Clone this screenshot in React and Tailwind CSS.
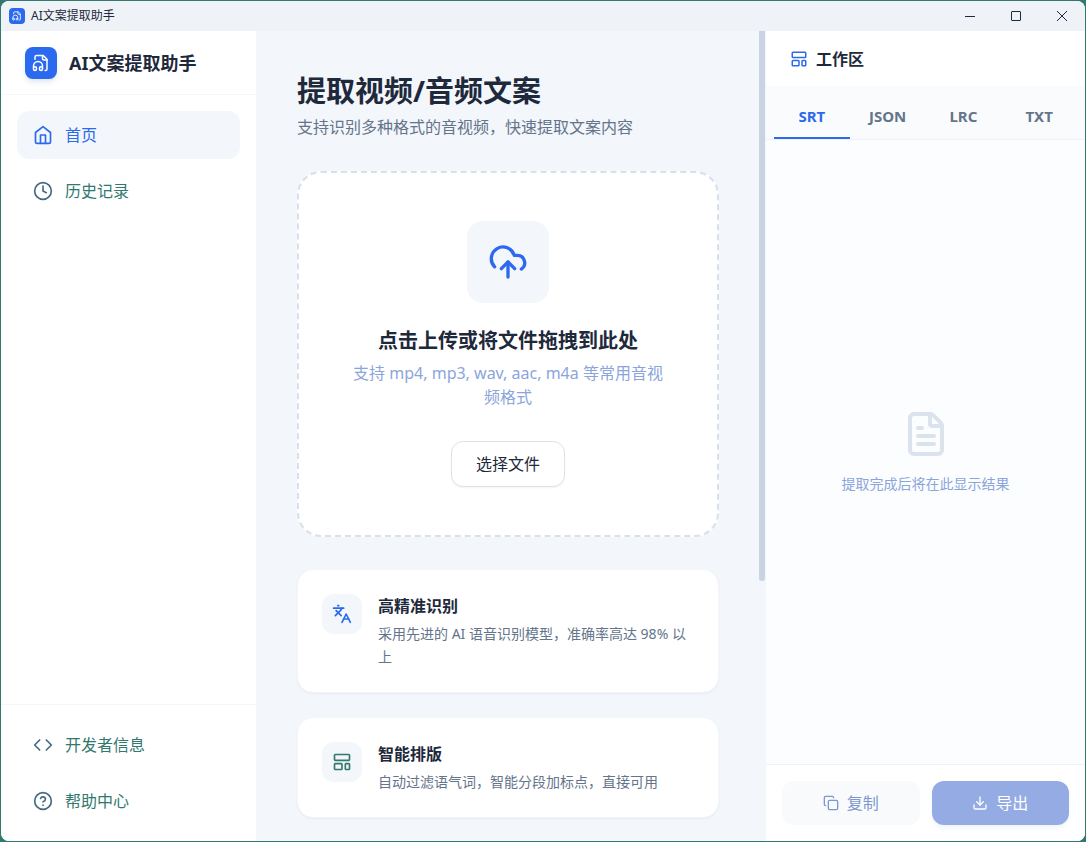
import { useState } from "react";
import {
  CircleHelp,
  Clock,
  Code,
  Copy,
  Download,
  FileText,
  Languages,
  LayoutTemplate,
} from "lucide-react";

function Icon({ size, children }) {
  return (
    <svg
      width={size}
      height={size}
      viewBox="0 0 24 24"
      fill="none"
      stroke="currentColor"
      strokeWidth="2"
      strokeLinecap="round"
      strokeLinejoin="round"
      aria-hidden="true"
    >
      {children}
    </svg>
  );
}

function HomeIcon({ size }) {
  return (
    <Icon size={size}>
      <path d="m3 9 9-7 9 7v11a2 2 0 0 1-2 2H5a2 2 0 0 1-2-2z" />
      <path d="M9 22V12h6v10" />
    </Icon>
  );
}

function UploadIcon({ size }) {
  return (
    <Icon size={size}>
      <path d="M4 14.899A7 7 0 1 1 15.71 8h1.79a4.5 4.5 0 0 1 2.5 8.242" />
      <path d="M12 12v9" />
      <path d="m16 16-4-4-4 4" />
    </Icon>
  );
}

function LogoIcon({ size }) {
  return (
    <Icon size={size}>
      <path d="M17.5 22h.5a2 2 0 0 0 2-2V7l-5-5H6a2 2 0 0 0-2 2v3" />
      <path d="M14 2v4a2 2 0 0 0 2 2h4" />
      <path d="M2 19a2 2 0 1 1 4 0v1a2 2 0 1 1-4 0v-4a6 6 0 0 1 12 0v4a2 2 0 1 1-4 0v-1a2 2 0 1 1 4 0" />
    </Icon>
  );
}

const mainLinks = [
  { label: "首页", icon: HomeIcon, active: true },
  { label: "历史记录", icon: Clock },
];

const footerLinks = [
  { label: "开发者信息", icon: Code },
  { label: "帮助中心", icon: CircleHelp },
];

const features = [
  {
    title: "高精准识别",
    text: "采用先进的 AI 语音识别模型，准确率高达 98% 以上",
    icon: Languages,
    color: "text-[#2b6aee]",
  },
  {
    title: "智能排版",
    text: "自动过滤语气词，智能分段加标点，直接可用",
    icon: LayoutTemplate,
    color: "text-[#33786f]",
  },
];

const tabs = ["SRT", "JSON", "LRC", "TXT"];

function NavLink({ label, icon: LinkIcon, active }) {
  return (
    <a
      href="#"
      className={`flex h-12 items-center gap-3 rounded-xl px-4 text-base ${
        active ? "bg-[#f3f6fa] text-[#2b6aee]" : "text-[#33786f]"
      }`}
    >
      <span className={active ? "" : "text-[#446a82]"}>
        <LinkIcon size={20} />
      </span>
      {label}
    </a>
  );
}

function TitleBar() {
  return (
    <header className="flex h-[30px] shrink-0 items-center bg-[#eff3f8] pl-2">
      <span className="flex size-4 items-center justify-center rounded-sm bg-[#2b6aee] text-white">
        <LogoIcon size={10} />
      </span>
      <span className="ml-1.5 text-xs">AI文案提取助手</span>
      <div className="ml-auto flex h-full">
        <button type="button" aria-label="最小化" className="flex w-[46px] items-center justify-center">
          <svg width="10" height="10" viewBox="0 0 10 10" fill="none" stroke="currentColor">
            <path d="M0 5.5h10" />
          </svg>
        </button>
        <button type="button" aria-label="最大化" className="flex w-[46px] items-center justify-center">
          <svg width="10" height="10" viewBox="0 0 10 10" fill="none" stroke="currentColor">
            <rect x="0.5" y="0.5" width="9" height="9" rx="0.5" />
          </svg>
        </button>
        <button type="button" aria-label="关闭" className="flex w-[46px] items-center justify-center">
          <svg width="10" height="10" viewBox="0 0 10 10" fill="none" stroke="currentColor">
            <path d="M0 0l10 10M10 0L0 10" />
          </svg>
        </button>
      </div>
    </header>
  );
}

function Sidebar() {
  return (
    <aside className="flex w-64 shrink-0 flex-col border-r border-[#f3f6fa] bg-white">
      <div className="flex h-16 items-center gap-3 border-b border-[#f3f6fa] px-6">
        <span className="flex size-8 items-center justify-center rounded-lg bg-[#2b6aee] text-white shadow-md shadow-slate-200">
          <LogoIcon size={18} />
        </span>
        <span className="text-lg font-bold">AI文案提取助手</span>
      </div>
      <nav className="flex flex-1 flex-col gap-2 p-4">
        {mainLinks.map((link) => (
          <NavLink key={link.label} {...link} />
        ))}
      </nav>
      <nav className="flex flex-col gap-2 border-t border-[#f3f6fa] p-4">
        {footerLinks.map((link) => (
          <NavLink key={link.label} {...link} />
        ))}
      </nav>
    </aside>
  );
}

function UploadCard() {
  return (
    <section className="mt-8 flex flex-col items-center rounded-3xl border-2 border-dashed border-[#d8e0eb] bg-white px-12 py-12 text-center">
      <div className="flex size-[82px] items-center justify-center rounded-2xl bg-[#f3f6fa] text-[#2b6aee]">
        <UploadIcon size={40} />
      </div>
      <h2 className="mt-6 text-xl leading-7 font-bold">点击上传或将文件拖拽到此处</h2>
      <p className="mt-1.5 text-base leading-6 text-[#8ba5dc]">
        支持 mp4, mp3, wav, aac, m4a 等常用音视频格式
      </p>
      <button type="button" className="mt-8 h-[46px] rounded-xl border border-[#dce3ed] bg-white px-6 text-base shadow-xs">
        选择文件
      </button>
    </section>
  );
}

function FeatureCard({ title, text, icon: CardIcon, color }) {
  return (
    <section className="flex gap-4 rounded-2xl border border-[#f3f6fa] bg-white p-6 shadow-xs">
      <div className={`flex size-10 shrink-0 items-center justify-center rounded-xl bg-[#f3f6fa] ${color}`}>
        <CardIcon size={20} />
      </div>
      <div>
        <h3 className="text-base leading-6 font-bold">{title}</h3>
        <p className="mt-1 text-sm leading-[23px] text-[#64748b]">{text}</p>
      </div>
    </section>
  );
}

function Workspace() {
  const [tab, setTab] = useState("SRT");

  return (
    <aside className="flex w-[320px] shrink-0 flex-col border-l border-[#f3f6fa] bg-[#fcfdfe]">
      <div className="flex h-[55px] items-center gap-2 bg-white px-6">
        <LayoutTemplate size={18} className="text-[#2b6aee]" />
        <h2 className="text-base font-bold">工作区</h2>
      </div>
      <div className="flex h-[54px] border-b border-[#eef2f7] bg-[#fafbfd] px-2">
        {tabs.map((name) => (
          <button
            key={name}
            type="button"
            onClick={() => setTab(name)}
            className={`flex-1 border-b-2 pt-2.5 text-[15px] font-bold ${
              tab === name ? "border-[#2b6aee] text-[#2b6aee]" : "border-transparent text-[#64748b]"
            }`}
          >
            {name}
          </button>
        ))}
      </div>
      <div className="flex flex-1 flex-col items-center justify-center gap-4">
        <FileText size={48} className="text-[#dbe3ed]" />
        <p className="text-sm text-[#8ba5dc]">提取完成后将在此显示结果</p>
      </div>
      <div className="flex gap-3 border-t border-[#eef2f7] bg-white p-4">
        <button type="button" className="flex h-11 flex-1 items-center justify-center gap-2 rounded-xl bg-[#f9fafc] text-[#7d97d0]">
          <Copy size={16} />
          复制
        </button>
        <button type="button" className="flex h-11 flex-1 items-center justify-center gap-2 rounded-xl bg-[#94ace3] text-white shadow-md shadow-slate-100">
          <Download size={16} />
          导出
        </button>
      </div>
    </aside>
  );
}

export default function App() {
  return (
    <div className="h-screen bg-[#33786f] p-px font-['Noto_Sans','Noto_Sans_CJK_SC',sans-serif] text-[#1e293b]">
      <div className="flex h-full flex-col overflow-hidden rounded-lg bg-[#f3f6fa]">
        <TitleBar />
        <div className="flex min-h-0 flex-1">
          <Sidebar />
          <main className="min-w-0 flex-1 overflow-hidden px-10 pt-10">
            <h1 className="text-[29px] leading-10 font-bold">提取视频/音频文案</h1>
            <p className="mt-1 text-base leading-6 text-[#64748b]">支持识别多种格式的音视频，快速提取文案内容</p>
            <UploadCard />
            <div className="mt-8 flex flex-col gap-6">
              {features.map((feature) => (
                <FeatureCard key={feature.title} {...feature} />
              ))}
            </div>
          </main>
          <div className="w-1.5 shrink-0">
            <div className="h-[550px] rounded-b-sm bg-[#c9d3e2]" />
          </div>
          <Workspace />
        </div>
      </div>
    </div>
  );
}
